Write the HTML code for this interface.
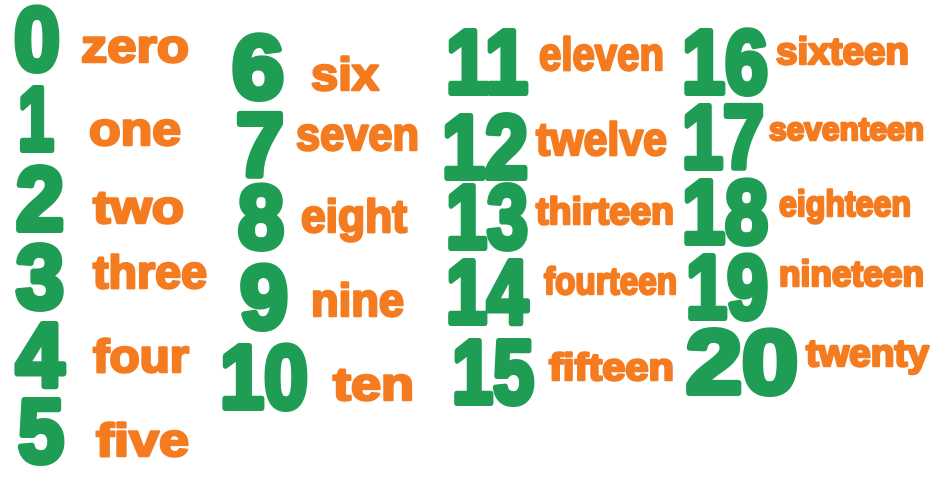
<!DOCTYPE html>
<html><head><meta charset="utf-8"><style>
html,body{margin:0;padding:0;background:#fff;width:932px;height:488px;overflow:hidden}
svg{display:block}
.n{font-family:"Liberation Sans",sans-serif;font-weight:bold;font-size:90px;fill:#1f9d55;stroke:#1f9d55;stroke-width:6;stroke-linejoin:round}
.w{font-family:"Liberation Sans",sans-serif;font-weight:bold;font-size:46px;fill:#f47b20;stroke:#f47b20;stroke-width:2.5;stroke-linejoin:round}
</style></head><body>
<svg width="932" height="488" viewBox="0 0 932 488">
<g class="n">
<text x="14" y="70" textLength="46" lengthAdjust="spacingAndGlyphs">0</text>
<text x="18" y="150" textLength="36" lengthAdjust="spacingAndGlyphs">1</text>
<text x="16" y="230" textLength="48" lengthAdjust="spacingAndGlyphs">2</text>
<text x="16" y="308" textLength="48" lengthAdjust="spacingAndGlyphs">3</text>
<text x="16" y="386" textLength="48" lengthAdjust="spacingAndGlyphs">4</text>
<text x="18" y="462" textLength="46" lengthAdjust="spacingAndGlyphs">5</text>
<text x="232" y="98" textLength="52" lengthAdjust="spacingAndGlyphs">6</text>
<text x="236" y="176" textLength="48" lengthAdjust="spacingAndGlyphs">7</text>
<text x="238" y="248" textLength="46" lengthAdjust="spacingAndGlyphs">8</text>
<text x="240" y="328" textLength="48" lengthAdjust="spacingAndGlyphs">9</text>
<text x="220" y="408" textLength="88" lengthAdjust="spacingAndGlyphs">10</text>
<text x="446" y="93" textLength="82" lengthAdjust="spacingAndGlyphs">11</text>
<text x="442" y="178" textLength="86" lengthAdjust="spacingAndGlyphs">12</text>
<text x="446" y="248" textLength="82" lengthAdjust="spacingAndGlyphs">13</text>
<text x="446" y="323" textLength="82" lengthAdjust="spacingAndGlyphs">14</text>
<text x="452" y="403" textLength="82" lengthAdjust="spacingAndGlyphs">15</text>
<text x="682" y="93" textLength="86" lengthAdjust="spacingAndGlyphs">16</text>
<text x="682" y="168" textLength="82" lengthAdjust="spacingAndGlyphs">17</text>
<text x="682" y="243" textLength="86" lengthAdjust="spacingAndGlyphs">18</text>
<text x="686" y="318" textLength="82" lengthAdjust="spacingAndGlyphs">19</text>
<text x="686" y="393" textLength="112" lengthAdjust="spacingAndGlyphs">20</text>
</g>
<g class="w">
<text x="81" y="62" textLength="108" lengthAdjust="spacingAndGlyphs">zero</text>
<text x="89" y="145" textLength="92" lengthAdjust="spacingAndGlyphs">one</text>
<text x="93" y="223" textLength="91" lengthAdjust="spacingAndGlyphs">two</text>
<text x="93" y="288" textLength="114" lengthAdjust="spacingAndGlyphs">three</text>
<text x="93" y="372" textLength="96" lengthAdjust="spacingAndGlyphs">four</text>
<text x="96" y="456" textLength="93" lengthAdjust="spacingAndGlyphs">five</text>
<text x="311" y="90" textLength="68" lengthAdjust="spacingAndGlyphs">six</text>
<text x="296" y="150" textLength="123" lengthAdjust="spacingAndGlyphs">seven</text>
<text x="301" y="232" textLength="106" lengthAdjust="spacingAndGlyphs">eight</text>
<text x="311" y="316" textLength="93" lengthAdjust="spacingAndGlyphs">nine</text>
<text x="333" y="400" textLength="81" lengthAdjust="spacingAndGlyphs">ten</text>
<text x="539" y="70" textLength="125" lengthAdjust="spacingAndGlyphs">eleven</text>
<text x="536" y="155" textLength="131" lengthAdjust="spacingAndGlyphs">twelve</text>
<text x="536" y="224" textLength="138" lengthAdjust="spacingAndGlyphs" style="font-size:38px">thirteen</text>
<text x="544" y="294" textLength="133" lengthAdjust="spacingAndGlyphs" style="font-size:38px">fourteen</text>
<text x="549" y="380" textLength="125" lengthAdjust="spacingAndGlyphs" style="font-size:38px">fifteen</text>
<text x="776" y="64" textLength="133" lengthAdjust="spacingAndGlyphs" style="font-size:38px">sixteen</text>
<text x="769" y="140" textLength="155" lengthAdjust="spacingAndGlyphs" style="font-size:32px">seventeen</text>
<text x="779" y="216" textLength="132" lengthAdjust="spacingAndGlyphs" style="font-size:36px">eighteen</text>
<text x="779" y="286" textLength="145" lengthAdjust="spacingAndGlyphs" style="font-size:36px">nineteen</text>
<text x="806" y="366" textLength="123" lengthAdjust="spacingAndGlyphs" style="font-size:38px">twenty</text>
</g>
</svg>
</body></html>
